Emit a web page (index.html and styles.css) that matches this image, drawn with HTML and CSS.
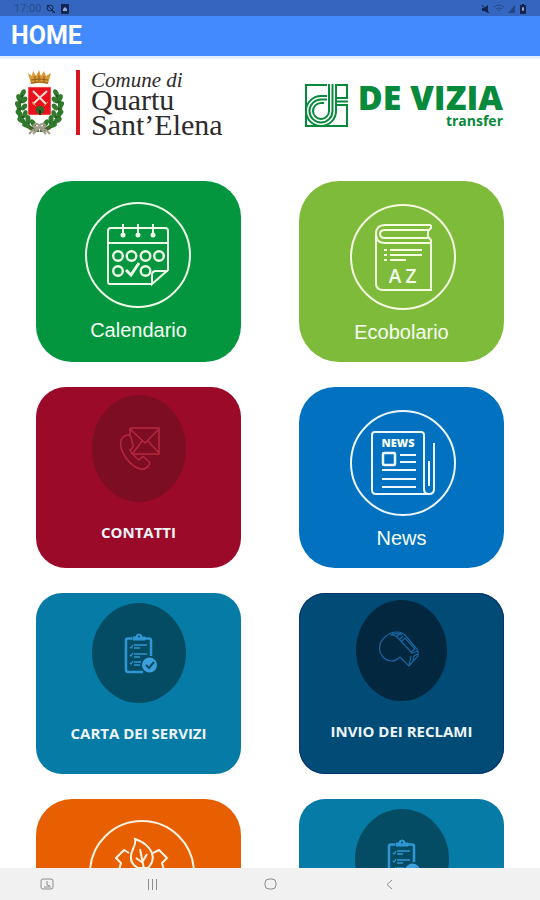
FILE: index.html
```
<!DOCTYPE html>
<html lang="it">
<head>
<meta charset="utf-8">
<meta name="viewport" content="width=device-width, initial-scale=1">
<title>Home</title>
<link rel="stylesheet" href="styles.css">
</head>
<body>
<div class="status">
  <span class="status-group">
    <span class="clock">17:00</span>
    <svg width="10" height="10" viewBox="0 0 10 10" fill="none" stroke="currentColor"><circle cx="4" cy="4" r="3"/><path d="M1 1l8 8M6 8h3"/></svg>
    <svg width="8" height="10" viewBox="0 0 8 10"><rect width="8" height="10" rx="1" fill="currentColor"/><path d="M2 5l2-2 2 2v2H2z" fill="#8fabdf"/></svg>
  </span>
  <span class="status-group status-right">
    <svg width="8" height="10" viewBox="0 0 8 10"><path d="M0 4h2l4-3v8L2 7H0z" fill="currentColor"/><path d="M0 1l7 8" stroke="currentColor"/></svg>
    <svg class="faint" width="10" height="10" viewBox="0 0 10 10" fill="none" stroke="currentColor"><path d="M0 3q5-4 10 0M2 5q3-2 6 0M4 7q1-1 2 0"/></svg>
    <svg class="faint" width="8" height="10" viewBox="0 0 8 10"><path d="M0 9l7-8v8z" fill="currentColor"/></svg>
    <svg width="6" height="10" viewBox="0 0 6 10"><path d="M2 0h2v1h2v9H0V1h2z" fill="currentColor"/><path d="M3 3v4M2 5h2" stroke="#b9cdf2"/></svg>
  </span>
</div>

<header class="appbar"><h1>HOME</h1></header>

<main>
  <section class="brands">
    <div class="comune">
      <svg class="crest" width="48" height="66" viewBox="0 0 48 66">
        <defs>
          <g id="branch">
            <path d="M6 26Q-1 42 7 52t16 9" fill="none" stroke="#3c6b25" stroke-width="4"/>
            <g fill="#2f7a2c">
              <ellipse cx="7" cy="24" rx="2.500" ry="4" transform="rotate(25 7 24)"/>
              <ellipse cx="3" cy="29" rx="2.500" ry="4" transform="rotate(-20 3 29)"/>
              <ellipse cx="8" cy="31" rx="2.500" ry="4" transform="rotate(50 8 31)"/>
              <ellipse cx="2" cy="36" rx="2.500" ry="4" transform="rotate(-30 2 36)"/>
              <ellipse cx="8" cy="38" rx="2.500" ry="4" transform="rotate(40 8 38)"/>
              <ellipse cx="3" cy="44" rx="2.500" ry="4" transform="rotate(-45 3 44)"/>
              <ellipse cx="9" cy="45" rx="2.500" ry="4" transform="rotate(20 9 45)"/>
              <ellipse cx="5" cy="51" rx="2.500" ry="4" transform="rotate(-60 5 51)"/>
              <ellipse cx="12" cy="50" rx="2.500" ry="4"/>
              <ellipse cx="10" cy="56" rx="2.500" ry="4" transform="rotate(-75 10 56)"/>
              <ellipse cx="17" cy="54" rx="2.500" ry="4" transform="rotate(-30 17 54)"/>
            </g>
            <g fill="#194d1d"><circle cx="5" cy="33" r="1"/><circle cx="4" cy="40" r="1"/><circle cx="7" cy="48" r="1"/><circle cx="13" cy="54" r="1"/><circle cx="6" cy="27" r="1"/></g>
            <path d="M24 57q-4-4-6-1t6 2l-7 3-4 4M23 59l-6 6" fill="none" stroke="#a39a8b" stroke-width="2"/>
          </g>
        </defs>
        <use href="#branch"/>
        <use href="#branch" transform="matrix(-1 0 0 1 47 0)"/>
        <path d="M15 15L12 4l4 3 1-5 3 5 3-6 2 6 3-5 2 5 5-3-3 11q-9-2-17 0z" fill="#d99a35"/>
        <path d="M15 11q8-2 17 0M15 14q8-2 17 0M19 7v6M23 6v6M28 7v6" fill="none" stroke="#8f5b18"/>
        <path d="M12 18h23v27q0 1-1 1H13q-1 0-1-1z" fill="#e8101c" stroke="#f4d9c9" stroke-width=".6"/>
        <path d="M17 22l13 13M31 22L17 35" stroke="#f3dcd5" stroke-width="2"/>
        <path d="M16 33l4 4M32 33l-4 4" stroke="#d49a4b"/>
        <circle cx="24" cy="41" r="4" fill="#2a6a24"/>
        <path d="M24 41v5" stroke="#3b2a12" stroke-width="2"/>
      </svg>
      <span class="rule"></span>
      <p class="comune-name"><em>Comune di</em><span>Quartu</span><span>Sant’Elena</span></p>
    </div>
    <div class="vizia">
      <svg width="43" height="43" viewBox="0 0 43 43" fill="none" stroke="#088a3c" stroke-width="2">
        <path d="M22 1H1v41h41V22M32 1h10v12"/>
        <path d="M24 0v27a8 8 0 1 1-8-8h3"/>
        <path d="M27.500 0v27a11.500 11.500 0 1 1-11.500-11.500h6"/>
        <path d="M31 0v27a15 15 0 1 1-15-15h6"/>
        <path d="M31 14h12M31 17.500h12M31 21h12"/>
      </svg>
      <p class="vizia-name"><strong>DE VIZIA</strong><span>transfer</span></p>
    </div>
  </section>

  <nav class="tiles">
    <a class="tile green" href="#calendario">
      <svg width="106" height="106" viewBox="0 0 106 106" fill="none" stroke="#eefbe6" stroke-width="2">
        <circle cx="52" cy="53" r="52"/>
        <path d="M66 82H24q-2 0-2-2V29q0-3 3-3h54q3 0 3 3v39L66 82V73q0-4 4-4h12M22 41h60"/>
        <path d="M37 22v11M52 22v11M67 22v11"/>
        <g fill="#eefbe6" stroke="none"><circle cx="37" cy="33" r="2.500"/><circle cx="52" cy="33" r="2.500"/><circle cx="67" cy="33" r="2.500"/></g>
        <g stroke-width="2.400"><circle cx="32" cy="54" r="4.800"/><circle cx="45.500" cy="54" r="4.800"/><circle cx="59.500" cy="54" r="4.800"/><circle cx="73" cy="54" r="4.800"/>
        <circle cx="32" cy="69" r="4.800"/><circle cx="59.500" cy="69" r="4.800"/></g>
        <path d="M40 68l5 5 8-12" stroke-width="3"/>
      </svg>
      <span>Calendario</span>
    </a>

    <a class="tile lime" href="#ecobolario">
      <svg width="106" height="106" viewBox="0 0 106 106" fill="none" stroke="#f4fde0" stroke-width="2">
        <circle cx="54" cy="53" r="52"/>
        <path d="M82 21H36q-9 0-9 9v49q0 7 7 7h48V39H36q-9 0-9-9"/>
        <path d="M82 21v3l-3 3v6l3 3v3M79 26H36q-5 0-5 4t5 4h43"/>
        <path d="M35 46h3M41 46h32M35 51h3M41 51h32M35 56h3M41 56h16"/>
        <text class="glyph-az" x="46 62" y="79">AZ</text>
      </svg>
      <span>Ecobolario</span>
    </a>

    <a class="tile red dark" href="#contatti">
      <svg width="94" height="107" viewBox="0 0 94 107" fill="none" stroke="#b5283f" stroke-width="1.500">
        <ellipse cx="47" cy="53.500" rx="47" ry="53.500" fill="#7c0d23" stroke="none"/>
        <path d="M38 33h29v26H40M38 33v8M38 34l15 14 14-14M67 58L56 46M41 58l9-12"/>
        <path d="M36 40q-4 0-7 5-2 8 5 18 7 9 14 11 6 1 9-4 2-2-1-4l-4-4q-2-1-3 1l-2 2q-6-4-9-10l2-2q2-2 1-3l-2-8q-1-2-3-2z"/>
      </svg>
      <span>CONTATTI</span>
    </a>

    <a class="tile blue" href="#news">
      <svg width="106" height="106" viewBox="0 0 106 106" fill="none" stroke="#edf7ff" stroke-width="2">
        <circle cx="54" cy="53" r="52"/>
        <path d="M80 84H27q-4 0-4-4V25q0-3 3-3h46q3 0 3 3v54q0 5 5 5t5-5V33M80 51v25"/>
        <rect x="34" y="43" width="12" height="12" rx="1" stroke-width="2.500"/>
        <path d="M51 45h16M51 52h16M33 60h34M33 69h34M33 77h34"/>
        <text class="glyph-news" x="49" y="37">NEWS</text>
      </svg>
      <span>News</span>
    </a>

    <a class="tile teal dark" href="#carta">
      <svg width="94" height="100" viewBox="0 0 94 100">
        <g id="clipboard">
          <ellipse cx="47" cy="50" rx="47" ry="50" fill="#034c64"/>
          <g fill="none" stroke="#3296d2" stroke-width="2.500">
            <path d="M40 35.500h-4q-2 0-2 2V67q0 2 2 2h15M53 35.500h4q2 0 2 2V53"/>
            <path d="M41 37v-3h3q0-3 3-3t3 3h3v3z" fill="#3296d2" stroke-width="1"/>
            <path d="M38 44l1 1 2-3M42 42h13M42 45h6M38 52l1 1 2-3M42 51h13M42 54h6M38 60l1 1 2-3M42 59h7M42 62h6" stroke-width="1.300"/>
          </g>
          <circle cx="47" cy="33.500" r="1" fill="#034c64"/>
          <circle cx="57.500" cy="62" r="7.500" fill="#3ba0dc"/>
          <path d="M54 62l3 3 5-6" fill="none" stroke="#034c64" stroke-width="2"/>
        </g>
      </svg>
      <span>CARTA DEI SERVIZI</span>
    </a>

    <a class="tile navy dark" href="#reclami">
      <svg width="91" height="101" viewBox="0 0 91 101" fill="none" stroke="#1b67a3" stroke-width="1.200">
        <ellipse cx="45.500" cy="50.500" rx="45.500" ry="50.500" fill="#02273f" stroke="none"/>
        <path d="M44 57q-4 4-9 4-8-1-11-9-2-9 5-15 5-5 12-5 5 0 8 3l12 14q2 3 1 7l-9 10-9-9z"/>
        <path d="M34 35q5-1 9 4l13 14 6-2M36 34q6-1 10 1M40 37l5-4M45 42l4-4 10 11-4 3M43 40l4-4M53 66l2-10M57 61l1-5 4-2"/>
      </svg>
      <span>INVIO DEI RECLAMI</span>
    </a>

    <a class="tile orange" href="#ambiente" aria-label="Ambiente">
      <svg width="106" height="106" viewBox="-2 0 106 106" fill="none" stroke="#fff3e4" stroke-width="2">
        <circle cx="54" cy="53" r="52"/>
        <path d="M47 19q1 4-2 10-6 13 5 19h10q9-10 1-20-5-6-14-9z"/>
        <path d="M52 29l4 20M48 38l7 5M59 34l-4 7"/>
        <path d="M41 33l-5-3-8 8 5 5-2 7M65 33l6-3 8 8-5 5 2 7"/>
      </svg>
    </a>

    <a class="tile teal dark" href="#servizi" aria-label="Servizi">
      <svg width="94" height="100" viewBox="0 0 94 100"><use href="#clipboard"/></svg>
    </a>
  </nav>
</main>

<footer class="sysnav">
  <button aria-label="Schermata"><svg width="15" height="13" viewBox="0 0 15 13" fill="none" stroke="currentColor"><rect x="1" y="1" width="12" height="10" rx="2"/><path d="M7 3v4l3 1M4 9h7"/></svg></button>
  <button aria-label="Recenti"><svg width="11" height="11" viewBox="0 0 11 11" stroke="currentColor"><path d="M1.500 0v11M5.500 0v11M9.500 0v11"/></svg></button>
  <button aria-label="Home"><svg width="13" height="12" viewBox="0 0 13 12" fill="none" stroke="currentColor"><rect x="1" y="1" width="11" height="10" rx="4"/></svg></button>
  <button aria-label="Indietro"><svg width="7" height="11" viewBox="0 0 7 11" fill="none" stroke="currentColor"><path d="M6 1L1 5.500 6 10"/></svg></button>
</footer>
</body>
</html>
```
FILE: styles.css
```
* { box-sizing: border-box; }

body {
  margin: 0;
  height: 100vh;
  display: flex;
  flex-direction: column;
  background: #fff;
  font-family: "Liberation Sans", sans-serif;
}

h1, p { margin: 0; }
svg { display: block; flex: none; overflow: visible; }

.status {
  flex: none;
  height: 16px;
  padding: 2px 14px 0;
  display: flex;
  justify-content: space-between;
  align-items: center;
  background: #3566bf;
  color: #14264f;
}
.status-group { display: flex; align-items: center; gap: 5px; }
.status-right { gap: 4px; }
.clock { font: 11px/12px Roboto, sans-serif; color: #2a4b8c; }
.faint { opacity: 0.5; }

.appbar {
  flex: none;
  height: 43px;
  padding-left: 11px;
  display: flex;
  align-items: center;
  background: #448aff;
  border-bottom: 3px solid #e6edfb;
}
.appbar h1 { font: 700 25px/28px Roboto, sans-serif; color: #fff; }

main { flex: 1; min-height: 0; overflow: hidden; }

.brands {
  padding: 8px 37px 44px 16px;
  display: flex;
  justify-content: space-between;
  align-items: center;
}
.comune, .vizia { display: flex; align-items: center; }
.rule { width: 4px; height: 65px; margin: 0 11px 0 12px; background: #d9151d; }
.comune-name {
  padding-top: 6px;
  display: flex;
  flex-direction: column;
  font: 30px/25px "Liberation Serif", serif;
  color: #2d2b2b;
}
.comune-name em { font-size: 21px; line-height: 14px; }

.vizia { gap: 10px; padding-top: 6px; color: #088a3c; }
.vizia-name {
  display: flex;
  flex-direction: column;
  align-items: flex-end;
  font-family: "Open Sans", sans-serif;
}
.vizia-name strong { font-size: 34px; font-weight: 800; line-height: 32px; }
.vizia-name span { font-size: 14px; font-weight: 700; line-height: 16px; }

.tiles {
  padding: 0 36px 25px;
  display: grid;
  grid-template-columns: 1fr 1fr;
  grid-auto-rows: 181px;
  gap: 25px 58px;
}
.tile {
  padding-top: 21px;
  display: flex;
  flex-direction: column;
  align-items: center;
  gap: 10px;
  border-radius: 36px;
  color: #f6fff2;
  font-size: 20px;
  line-height: 24px;
  text-decoration: none;
}
.dark {
  padding-top: 10px;
  gap: 20px;
  border-radius: 26px;
  color: #eef4f8;
  font: 700 15px/20px "Open Sans", sans-serif;
}
.green { background: #03963f; }
.lime { background: #7fbb3b; padding-top: 23px; border-radius: 40px; }
.red { background: #9b0a28; padding-top: 8px; border-radius: 30px; }
.blue { background: #0271bf; padding-top: 23px; }
.teal { background: #057ba6; }
.navy { background: #014c77; padding-top: 7px; box-shadow: inset 0 0 0 1px #07336e; }
.orange { background: #e85f02; }

.glyph-az, .glyph-news { fill: #f6fdf0; stroke: none; text-anchor: middle; }
.glyph-az { font: 600 19px "Open Sans", sans-serif; }
.glyph-news { font: 800 11px "Open Sans", sans-serif; }

.sysnav {
  flex: none;
  height: 32px;
  display: grid;
  grid-template-columns: 95fr 114fr 122fr 116fr 93fr;
  background: #f1f1f1;
}
.sysnav button {
  display: flex;
  align-items: center;
  justify-content: center;
  padding: 0;
  border: 0;
  background: none;
  color: #8c8c8c;
}
```
